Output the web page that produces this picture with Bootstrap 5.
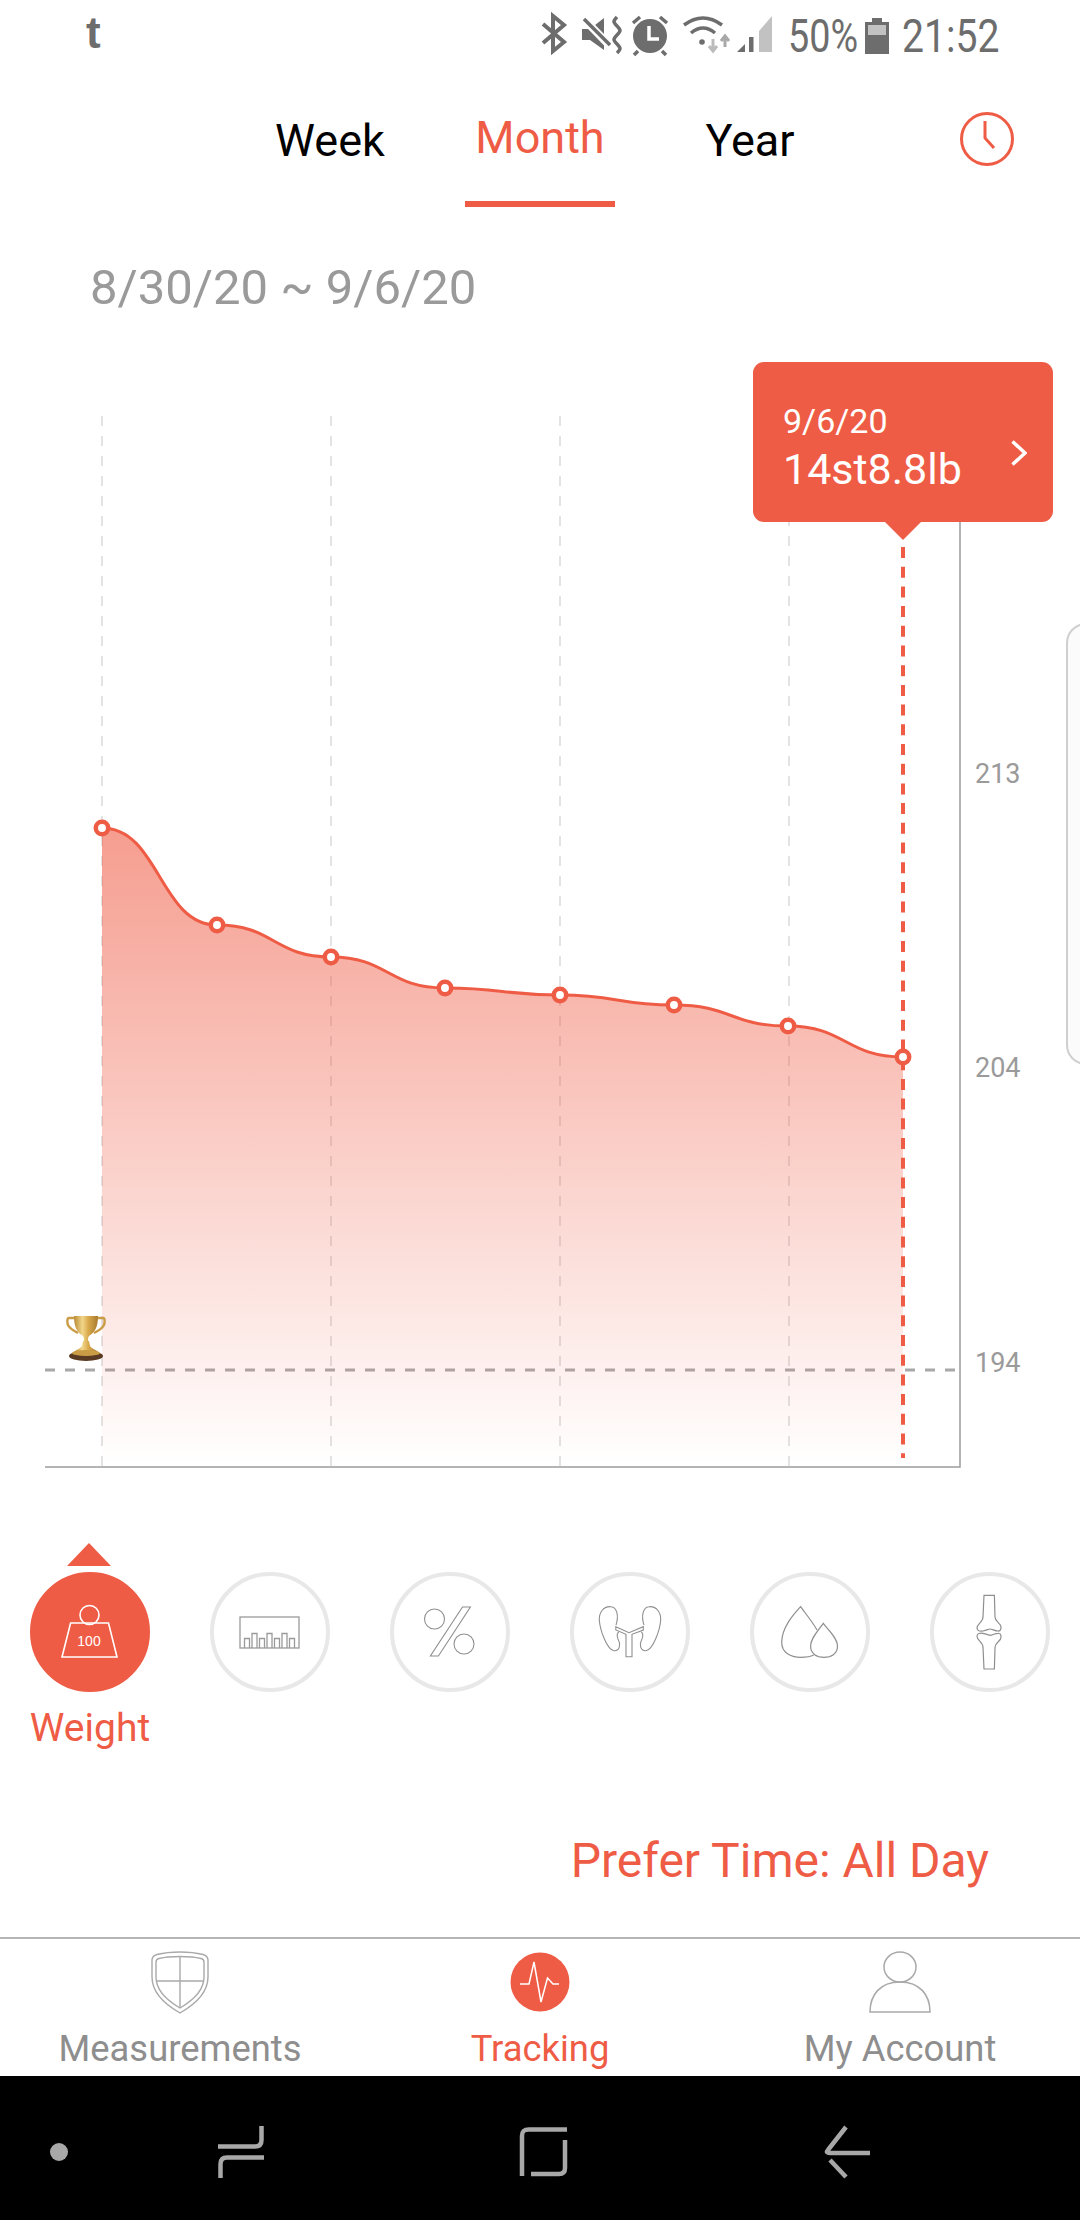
<!DOCTYPE html>
<html lang="en">
  <head>
    <meta charset="UTF-8" />
    <meta name="viewport" content="width=device-width, initial-scale=1" />
    <title>Tracking</title>
    <link
      href="https://cdn.jsdelivr.net/npm/bootstrap@5.3.0/dist/css/bootstrap.min.css"
      rel="stylesheet"
    />
    <style>
      body {
        width: 1080px;
        height: 2220px;
        overflow: hidden;
        background: #fff;
        font-family: Roboto, "Liberation Sans", sans-serif;
      }
      .app-page {
        height: 2220px;
      }
      /* status bar */
      .status-strip {
        height: 72px;
        padding: 0 81px 0 86px;
        color: #6d6d6d;
      }
      .status-t {
        font-family: "Liberation Sans", sans-serif;
        font-size: 44px;
        font-weight: 700;
        line-height: 1;
        margin-top: -6px;
      }
      .status-num {
        font-size: 46px;
        line-height: 72px;
        white-space: nowrap;
        transform-origin: left center;
      }
      .status-pct {
        width: 69px;
        margin-left: 6px;
        transform: scaleX(0.82);
      }
      .status-time {
        width: 97px;
        margin-left: 13px;
        transform: scaleX(0.85);
      }
      /* period tabs */
      .period-tabs {
        height: 135px;
        padding: 0 65px 0 255px;
        gap: 60px;
      }
      .period-tab {
        width: 150px;
        font-size: 45px;
        line-height: 1;
        text-align: center;
        color: #000;
        padding-top: 46px;
      }
      .period-tab.on {
        color: #ef5c45;
        padding-top: 43px;
        border-bottom: 6px solid #ef5c45;
      }
      .clock-icon {
        margin-top: 39px;
      }
      .date-range {
        height: 133px;
        padding: 56px 0 0 90px;
        font-size: 49px;
        line-height: 1;
        color: #9a9a9a;
      }
      /* chart */
      .chart-box {
        height: 1180px;
        overflow: hidden;
      }
      .chart-box svg {
        display: block;
      }
      .axis-num {
        left: 975px;
        font-size: 27px;
        line-height: 30px;
        color: #9a9a9a;
      }
      .value-tip {
        left: 753px;
        top: 22px;
        width: 300px;
        height: 160px;
        padding: 36px 0 0 30px;
        border-radius: 11px;
        background: #ef5c45;
        color: #fff;
      }
      .value-tip-date {
        font-size: 34px;
        line-height: 46px;
      }
      .value-tip-num {
        font-size: 43px;
        line-height: 50px;
      }
      .value-tip svg {
        right: 26px;
        top: 78px;
      }
      .side-edge {
        left: 1066px;
        top: 283px;
        width: 40px;
        height: 442px;
        border: 2px solid #cfcfcf;
        border-radius: 22px;
        background: #fbfbfb;
      }
      /* metric icons */
      .metric-row {
        height: 278px;
        padding: 52px 0 0 30px;
        gap: 60px;
      }
      .metric-item {
        width: 120px;
      }
      .metric-ring {
        width: 120px;
        height: 120px;
        border: 4px solid #e8e8e8;
        border-radius: 50%;
      }
      .metric-ring svg {
        display: block;
        margin: -4px;
      }
      .metric-ring.on {
        border-color: #ef5c45;
        background: #ef5c45;
      }
      .metric-arrow {
        left: 37px;
        top: -29px;
        width: 0;
        height: 0;
        border-left: 22px solid transparent;
        border-right: 22px solid transparent;
        border-bottom: 23px solid #ef5c45;
      }
      .metric-name {
        margin: 11px -5px 0;
        font-size: 39px;
        line-height: 50px;
        text-align: center;
        white-space: nowrap;
        color: #ef5c45;
      }
      .prefer-line {
        margin-top: 33px;
        padding-right: 91px;
        font-size: 48px;
        line-height: 60px;
        color: #ef5c45;
      }
      /* bottom nav */
      .bottom-tabs {
        height: 139px;
        border-top: 2px solid #b5b5b5;
        padding-top: 12px;
      }
      .bottom-tabs svg {
        display: block;
        margin: 0 auto;
      }
      .bottom-label {
        margin-top: 14px;
        font-size: 36.4px;
        line-height: 42px;
        color: #8e8e8e;
      }
      .bottom-label.on {
        color: #ef5c45;
      }
      .soft-keys {
        height: 144px;
        background: #000;
      }
      .soft-keys svg {
        display: block;
      }
    </style>
  </head>
  <body>
    <div class="app-page d-flex flex-column">
      <!-- Status bar -->
      <div class="status-strip d-flex align-items-center">
        <span class="status-t">t</span>
        <svg class="ms-auto" width="250" height="55" viewBox="0 0 250 55">
          <path d="M11 15 32 33 21 42V7L32 16 11 34" fill="none" stroke="#6d6d6d" stroke-width="4" />
          <path d="M50 20h8L72 9v32L58 31h-8z" fill="#6d6d6d" />
          <path d="M49 7 79 38" stroke="#fff" stroke-width="8" />
          <path d="M52 10 78 36" stroke="#6d6d6d" stroke-width="3.5" />
          <path d="M85 8c-4 4-4 5 0 9s4 5 0 9-4 5 0 9 4 5 0 9" fill="none" stroke="#6d6d6d" stroke-width="3.5" />
          <circle cx="118" cy="27" r="17" fill="#6d6d6d" />
          <path d="M117 17V30H127" fill="none" stroke="#fff" stroke-width="3.5" />
          <path d="M101 14 108 8M128 8 135 14M106 42 102 46M130 42 134 46" stroke="#6d6d6d" stroke-width="3.5" />
          <path d="M152 16Q171 2 190 16M159 24Q171 14 183 24" fill="none" stroke="#6d6d6d" stroke-width="3.5" />
          <circle cx="170" cy="33" r="2.8" fill="#6d6d6d" />
          <path d="M181 30V42M177 37 181 42 185 37" fill="none" stroke="#bbb" stroke-width="3" />
          <path d="M193 38V27M189 32 193 27 197 32" fill="none" stroke="#a8a8a8" stroke-width="3" />
          <path d="M205 43 213 35V43Z" fill="#6d6d6d" />
          <rect x="217" y="28" width="4.5" height="15" fill="#6d6d6d" />
          <path d="M227 22 240 7V43H227Z" fill="#c2c2c2" />
        </svg>
        <span class="status-num status-pct">50%</span>
        <svg class="ms-2" width="24" height="36" viewBox="0 0 24 36">
          <path d="M7 0h10v4h7v32H0V4h7z" fill="#6d6d6d" />
          <rect x="3" y="7" width="18" height="10" fill="#c2c2c2" />
        </svg>
        <span class="status-num status-time">21:52</span>
      </div>

      <!-- Week / Month / Year -->
      <div class="period-tabs d-flex">
        <div class="period-tab">Week</div>
        <div class="period-tab on">Month</div>
        <div class="period-tab">Year</div>
        <svg class="clock-icon ms-auto" width="56" height="56" viewBox="0 0 56 56">
          <circle cx="28" cy="28" r="25.5" fill="none" stroke="#ef5c45" stroke-width="3" />
          <path d="M26 10V27L35 37" fill="none" stroke="#ef5c45" stroke-width="3" />
        </svg>
      </div>

      <div class="date-range">8/30/20 ~ 9/6/20</div>

      <!-- Chart -->
      <div class="chart-box position-relative">
        <svg width="1080" height="1180" viewBox="0 340 1080 1180">
          <defs>
            <linearGradient id="areaFade" x1="0" y1="0" x2="0" y2="1">
              <stop offset="0" stop-color="#ef5c45" stop-opacity="0.6" />
              <stop offset="1" stop-color="#ef5c45" stop-opacity="0" />
            </linearGradient>
            <linearGradient id="cupGold" x1="0" y1="0" x2="1" y2="0">
              <stop offset="0" stop-color="#b98a35" />
              <stop offset="0.35" stop-color="#f2d68a" />
              <stop offset="0.6" stop-color="#d9a94c" />
              <stop offset="1" stop-color="#a87a2c" />
            </linearGradient>
          </defs>
          <g stroke="#e3e3e3" stroke-width="2" stroke-dasharray="10 10">
            <path d="M102 416V1466" />
            <path d="M331 416V1466" />
            <path d="M560 416V1466" />
            <path d="M789 416V1466" />
          </g>
          <path d="M45 1370H958" stroke="#a8a8a8" stroke-width="3" stroke-dasharray="10 10" />
          <path d="M960 522V1467H45" fill="none" stroke="#9c9c9c" stroke-width="1.5" />
          <path
            d="M102 828C159 828 160 925 217 925S274 957 331 957 388 988 445 988 503 995 560 995 617 1005 674 1005 731 1026 788 1026 846 1057 903 1057V1466H102Z"
            fill="url(#areaFade)"
          />
          <path d="M903 547V1458" stroke="#ef5c45" stroke-width="4" stroke-dasharray="11 8.7" />
          <path
            d="M102 828C159 828 160 925 217 925S274 957 331 957 388 988 445 988 503 995 560 995 617 1005 674 1005 731 1026 788 1026 846 1057 903 1057"
            fill="none"
            stroke="#ef5c45"
            stroke-width="3"
          />
          <g fill="#fff" stroke="#ef5c45" stroke-width="4.5">
            <circle cx="102" cy="828" r="6.2" />
            <circle cx="217" cy="925" r="6.2" />
            <circle cx="331" cy="957" r="6.2" />
            <circle cx="445" cy="988" r="6.2" />
            <circle cx="560" cy="995" r="6.2" />
            <circle cx="674" cy="1005" r="6.2" />
            <circle cx="788" cy="1026" r="6.2" />
            <circle cx="903" cy="1057" r="6.2" />
          </g>
          <path d="M884 521H922L903 540Z" fill="#ef5c45" />
          <!-- trophy -->
          <g transform="translate(67 1315)">
            <path d="M7 3H2C0 3 0 7 1 10 3 14 7 16 11 18M31 3H36C38 3 38 7 37 10 35 14 31 16 27 18" fill="none" stroke="#c99c45" stroke-width="2.4" />
            <path d="M7 1H31C31 10 29 17 22 21 21 22 21 24 21 26H17C17 24 17 22 16 21 9 17 7 10 7 1Z" fill="url(#cupGold)" />
            <path d="M16 26H22L23 31C25 34 30 35 31 37H7C8 35 13 34 15 31Z" fill="url(#cupGold)" />
            <ellipse cx="19" cy="41" rx="17" ry="5" fill="#5a3a22" />
            <ellipse cx="19" cy="38" rx="14" ry="3" fill="#c99c45" />
          </g>
        </svg>
        <span class="axis-num position-absolute" style="top: 419px">213</span>
        <span class="axis-num position-absolute" style="top: 713px">204</span>
        <span class="axis-num position-absolute" style="top: 1008px">194</span>
        <div class="side-edge position-absolute"></div>
        <div class="value-tip position-absolute">
          <div class="value-tip-date">9/6/20</div>
          <div class="value-tip-num">14st8.8lb</div>
          <svg class="position-absolute" width="16" height="26" viewBox="0 0 16 26">
            <path d="M1.5 1.5 14 13 1.5 24.5" fill="none" stroke="#fff" stroke-width="3.5" />
          </svg>
        </div>
      </div>

      <!-- Metric icons -->
      <div class="metric-row d-flex align-items-start">
        <div class="metric-item position-relative">
          <div class="metric-arrow position-absolute"></div>
          <div class="metric-ring on">
            <svg width="120" height="120" viewBox="0 0 120 120">
              <circle cx="59.5" cy="43" r="9.5" fill="none" stroke="#fff" stroke-width="1.6" />
              <path d="M40.6 51H78.5L87 85H32Z" fill="none" stroke="#fff" stroke-width="1.6" />
              <text x="59" y="74" text-anchor="middle" font-family="Liberation Sans, sans-serif" font-size="14" fill="#fff">100</text>
            </svg>
          </div>
          <div class="metric-name">Weight</div>
        </div>
        <div class="metric-item">
          <div class="metric-ring">
            <svg width="120" height="120" viewBox="0 0 120 120" fill="none" stroke="#9a9a9a" stroke-width="1.3">
              <rect x="30" y="45" width="59" height="31" />
              <path d="M34.5 76V66.500H39.500V76M42 76V61.500H47V76M49.500 76V66.500H54.500V76M57 76V61.500H62V76M64.500 76V66.500H69.500V76M72 76V61.500H77V76M79.500 76V66.500H84.500V76" />
            </svg>
          </div>
        </div>
        <div class="metric-item">
          <div class="metric-ring">
            <svg width="120" height="120" viewBox="0 0 120 120" fill="none" stroke="#8f8f8f" stroke-width="1.1">
              <circle cx="44.500" cy="47" r="10" />
              <circle cx="74" cy="72" r="10" />
              <path d="M72.500 35H80.400L48.400 84H40.400Z" />
            </svg>
          </div>
        </div>
        <div class="metric-item">
          <div class="metric-ring">
            <svg width="120" height="120" viewBox="0 0 120 120" fill="none" stroke="#8f8f8f" stroke-width="1.1">
              <path d="M46 53C49 44 47 35 41 34.700 33 34 29 41 29.300 48 30 58 37 78 44 78.700 50 79 51 72 48 67 46 63 48 60 49 60" />
              <path d="M74 53C71 44 73 35 79 34.700 87 34 91 41 90.700 48 90 58 83 78 76 78.700 70 79 69 72 72 67 74 63 72 60 71 60" />
              <path d="M45.800 54.700 59 60.700 73.300 54.700V58L62 62.300V84.700H56V62.300L45.800 58Z" />
            </svg>
          </div>
        </div>
        <div class="metric-item">
          <div class="metric-ring">
            <svg width="120" height="120" viewBox="0 0 120 120" fill="none" stroke="#8f8f8f" stroke-width="1.2">
              <path d="M67 58C62 49 55 41 50.600 34.700 42 44 32 56 31.700 70 31.500 81 41 85.300 50.600 85.300 55 85.300 60 85 63.700 83" />
              <path d="M73.300 51.300C79 59 87.500 66 87.500 74 87.500 82 81 85.300 74 85.300 67 85.300 60.600 82 60.600 74 60.600 66 68 59 73.300 51.300Z" />
            </svg>
          </div>
        </div>
        <div class="metric-item">
          <div class="metric-ring">
            <svg width="120" height="120" viewBox="0 0 120 120" fill="none" stroke="#8f8f8f" stroke-width="1.2">
              <path d="M54 23.300 53 45C53 50 47 52 47 56 47 59 50 59.500 53 59 57 58 59 57 60 57 62 57 65 59 68 59 71 59.500 71 56 71 55 71 51 65 50 65 45L64.400 23.300Z" />
              <path d="M54 97 53 75.300C53 70.300 47 68.300 47 64.300 47 61.300 50 60.800 53 61.300 57 62.300 59 63.300 60 63.300 62 63.300 65 61.300 68 61.300 71 60.800 71 64.300 71 65.300 71 69.300 65 70.300 65 75.300L64.400 97Z" />
            </svg>
          </div>
        </div>
      </div>

      <div class="prefer-line text-end">Prefer Time: All Day</div>

      <!-- Bottom nav -->
      <div class="bottom-tabs row g-0 mt-auto">
        <div class="col-4 text-center">
          <svg width="58" height="63" viewBox="0 0 58 63" fill="none" stroke="#a9a9a9" stroke-width="1.4">
            <path d="M29 1C38 1 46 2 52 3.500 55 4.500 57 6 57 9V26C57 42 43 54 29 62 15 54 1 42 1 26V9C1 6 3 4.500 6 3.500 12 2 20 1 29 1Z" />
            <path d="M29 5.500C37 5.500 44 6 50 7.500 52 8 53 9 53 11V26C53 39 41 50 29 57 17 50 5 39 5 26V11C5 9 6 8 8 7.500 14 6 21 5.500 29 5.500Z" />
            <path d="M29 5.500V57M5 30H53" />
          </svg>
          <div class="bottom-label">Measurements</div>
        </div>
        <div class="col-4 text-center">
          <svg width="60" height="63" viewBox="0 0 60 63">
            <circle cx="30" cy="31" r="29.500" fill="#ef5c45" />
            <path d="M10 33H19L24 11 31 51 37.500 27 43 33H49" fill="none" stroke="#fff" stroke-width="1.5" />
          </svg>
          <div class="bottom-label on">Tracking</div>
        </div>
        <div class="col-4 text-center">
          <svg width="62" height="63" viewBox="0 0 62 63" fill="none" stroke="#a9a9a9" stroke-width="1.5">
            <ellipse cx="31" cy="16" rx="16" ry="15" />
            <path d="M1 61C1 44 11 31 31 31S61 44 61 61Z" />
          </svg>
          <div class="bottom-label">My Account</div>
        </div>
      </div>

      <!-- Soft keys -->
      <div class="soft-keys">
        <svg width="1080" height="144" viewBox="0 2076 1080 144" fill="none" stroke="#a8a8a8">
          <circle cx="59" cy="2152" r="9" fill="#a8a8a8" stroke="none" />
          <path d="M261.500 2126V2140C261.500 2145 259 2146.500 255 2146.500H218" stroke-width="4.500" />
          <path d="M220.500 2178V2164C220.500 2159 223 2157.500 227 2157.500H264" stroke-width="4.500" />
          <path d="M522 2176V2136C522 2131 524 2129.500 529 2129.500H567" stroke-width="4.500" />
          <path d="M565 2140V2168C565 2172 563 2174 559 2174H531" stroke-width="4.500" />
          <path d="M846 2127 828 2150C826 2152 827 2153 830 2153H870" stroke-width="4.500" />
          <path d="M830 2160 846 2177" stroke-width="4.500" />
        </svg>
      </div>
    </div>
    <script src="https://cdn.jsdelivr.net/npm/bootstrap@5.3.0/dist/js/bootstrap.bundle.min.js"></script>
  </body>
</html>
